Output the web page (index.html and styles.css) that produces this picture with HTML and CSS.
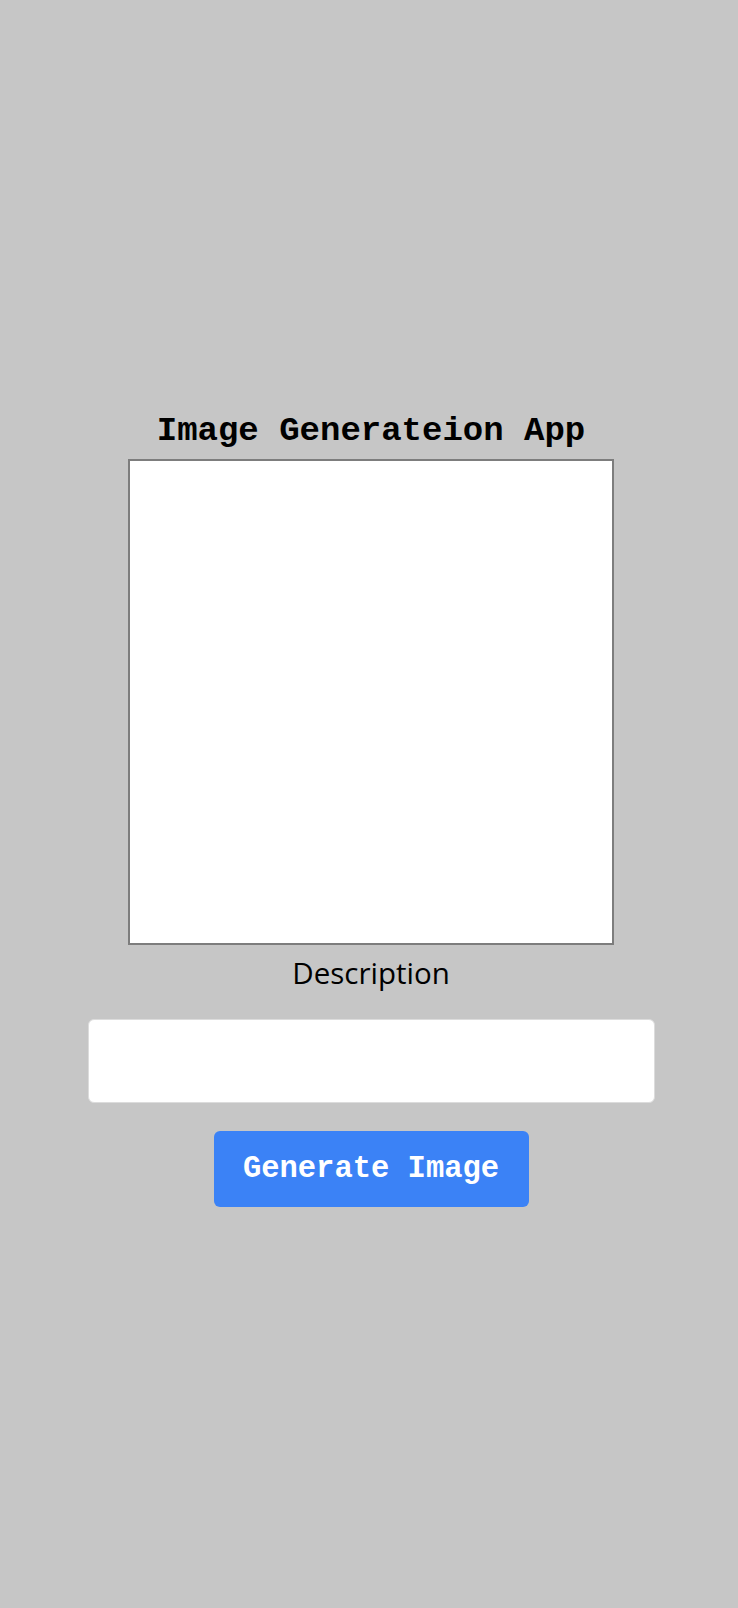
FILE: index.html
```html
<!DOCTYPE html>
<html lang="en">
<head>
<meta charset="utf-8">
<title>Image Generateion App</title>
<link rel="stylesheet" href="styles.css">
</head>
<body>
<main class="app">
  <h1 class="title">Image Generateion App</h1>
  <div class="preview"></div>
  <label class="label" for="desc">Description</label>
  <input class="desc-input" id="desc" type="text">
  <button class="generate-btn" type="button">Generate Image</button>
</main>
</body>
</html>
```

FILE: styles.css
```css
html, body {
  margin: 0;
  padding: 0;
}

body {
  background: #c6c6c6;
  font-family: "Liberation Mono", "Courier New", monospace;
}

.app {
  min-height: 100vh;
  box-sizing: border-box;
  display: flex;
  flex-direction: column;
  align-items: center;
  justify-content: center;
  padding: 11px 0 0 4px;
}

.title {
  margin: 0;
  font-family: "Liberation Mono", "Courier New", monospace;
  font-size: 34px;
  line-height: 36px;
  font-weight: 700;
  color: #000;
}

.preview {
  margin-top: 10px;
  width: 482px;
  height: 482px;
  background: #fff;
  border: 2px solid #7d7d7d;
}

.label {
  margin-top: 10px;
  font-family: "Open Sans", "Noto Sans", sans-serif;
  font-size: 29.5px;
  line-height: 36px;
  color: #000;
}

.desc-input {
  margin-top: 28px;
  width: 567px;
  height: 84px;
  box-sizing: border-box;
  border: 1px solid #dcdcdc;
  border-radius: 6px;
  background: #fff;
  outline: none;
  padding: 0 12px;
  font-size: 20px;
}

.generate-btn {
  margin-top: 28px;
  width: 315px;
  height: 76px;
  border: none;
  border-radius: 6px;
  background: #3b82f6;
  color: #fff;
  font-family: "Liberation Mono", "Courier New", monospace;
  font-size: 30.5px;
  font-weight: 700;
  padding: 0;
  cursor: pointer;
}
```
